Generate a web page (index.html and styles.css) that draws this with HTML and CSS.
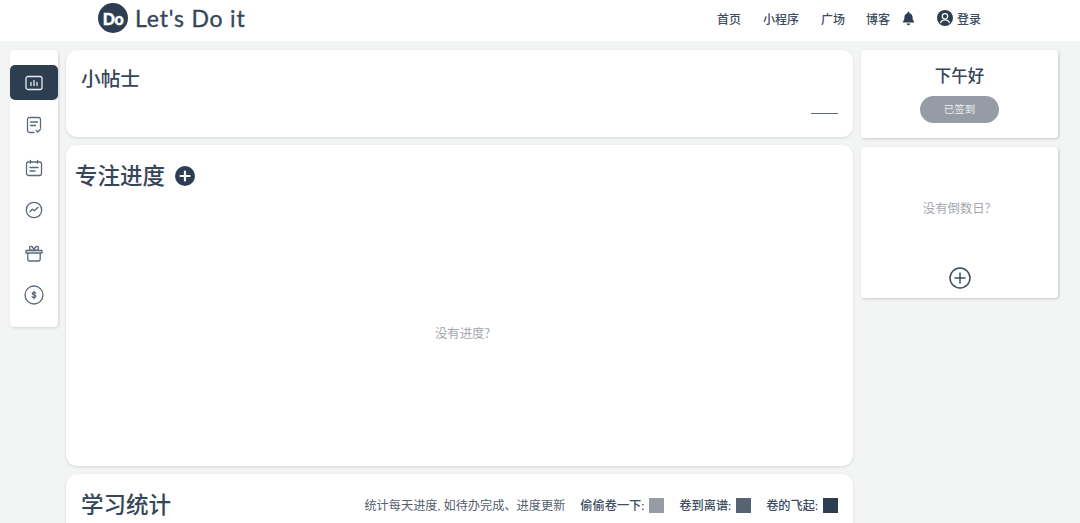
FILE: index.html
```html
<!DOCTYPE html>
<html lang="zh">
<head>
<meta charset="utf-8">
<title>Let's Do it</title>
<link rel="stylesheet" href="styles.css">
</head>
<body>
<header class="topbar">
  <div class="brand">
    <span class="logo">Do</span>
    <span class="brand-name">Let's Do it</span>
  </div>
  <nav class="nav">
    <a class="nav-link">首页</a>
    <a class="nav-link">小程序</a>
    <a class="nav-link">广场</a>
    <a class="nav-link">博客</a>
    <svg class="bell" viewBox="0 0 14 16"><path d="M7 0.8c.7 0 1.1.5 1.1 1.1v.4c2.1.5 3.3 2.2 3.3 4.4 0 2.6.6 3.6 1.6 4.6.3.4.1 1-.5 1H1.500c-.6 0-.8-.6-.5-1 1-1 1.600-2 1.600-4.600 0-2.200 1.200-3.900 3.300-4.400v-.4C5.900 1.300 6.300.8 7 .8zM5.200 13.400h3.600C8.800 14.500 8 15.200 7 15.200s-1.800-.7-1.800-1.800z" fill="#2d3e50"/></svg>
    <a class="login">
      <svg class="avatar" viewBox="0 0 16 16"><circle cx="8" cy="8" r="8" fill="#2d3e50"/><circle cx="8" cy="6.300" r="2.700" fill="none" stroke="#fff" stroke-width="1.200"/><path d="M3.500 13.200c.6-2.200 2.300-3.300 4.500-3.300s3.900 1.100 4.500 3.300" fill="none" stroke="#fff" stroke-width="1.200"/></svg>
      <span>登录</span>
    </a>
  </nav>
</header>

<div class="layout">
  <aside class="sidebar">
    <div class="side-item active">
      <svg class="side-icon" viewBox="0 0 18 18"><rect x="1" y="2.500" width="16" height="13" rx="2"/><path d="M6 11.500v-3M9 11.500v-5M12 11.500v-3"/></svg>
    </div>
    <div class="side-item">
      <svg class="side-icon" viewBox="0 0 18 18"><path d="M9 16.500H4.500a2 2 0 0 1-2-2v-11a2 2 0 0 1 2-2h9a2 2 0 0 1 2 2v8"/><path d="M5.500 6h7M5.500 9.500h5"/><path d="M11 14.500l1.700 1.500 3-3"/></svg>
    </div>
    <div class="side-item">
      <svg class="side-icon" viewBox="0 0 18 18"><rect x="1.500" y="3" width="15" height="13.500" rx="2"/><path d="M5.500 1.300v3M12.500 1.300v3M5 8.500h8M5 12h5"/></svg>
    </div>
    <div class="side-item">
      <svg class="side-icon" viewBox="0 0 18 18"><circle cx="9" cy="9" r="7.700"/><path d="M5 10.800l2.300-2.600 2.200 1.600 3.500-3.600"/></svg>
    </div>
    <div class="side-item">
      <svg class="side-icon" viewBox="0 0 18 18"><path d="M1 6.500h16v2.500H1zM2.800 9v6a2 2 0 0 0 2 2h8.400a2 2 0 0 0 2-2V9"/><path d="M9 6.500c-2 0-4.500-.3-4.500-2.500 0-2.500 3.500-2.500 4.500 2.500zM9 6.500c2 0 4.500-.3 4.500-2.500 0-2.500-3.500-2.500-4.500 2.500z"/></svg>
    </div>
    <div class="side-item">
      <svg class="side-icon coin" viewBox="0 0 20 20"><circle cx="10" cy="10" r="9"/><path class="dollar" d="M11.800 8.200c-.3-.6-.9-.9-1.800-.9-1 0-1.700.5-1.700 1.300 0 1.800 3.500.9 3.500 2.700 0 .9-.8 1.400-1.800 1.400-.9 0-1.600-.4-1.900-1M10 6.200v7.600"/></svg>
    </div>
  </aside>

  <main class="center">
    <section class="card tips">
      <h2 class="title">小帖士</h2>
      <div class="tips-foot"><span class="dash"></span></div>
    </section>
    <section class="card progress">
      <div class="progress-head">
        <h2 class="title big">专注进度</h2>
        <svg class="plus-solid" viewBox="0 0 20 20"><circle cx="10" cy="10" r="10" fill="#2d3e50"/><path d="M10 5.500v9M5.500 10h9" stroke="#fff" stroke-width="2.200" stroke-linecap="round"/></svg>
      </div>
      <p class="empty progress-empty">没有进度?</p>
    </section>
    <section class="card stats">
      <h2 class="title">学习统计</h2>
      <div class="legend">
        <span class="legend-note">统计每天进度, 如待办完成、进度更新</span>
        <span class="legend-item">偷偷卷一下:<i class="swatch low"></i></span>
        <span class="legend-item">卷到离谱:<i class="swatch mid"></i></span>
        <span class="legend-item">卷的飞起:<i class="swatch high"></i></span>
      </div>
    </section>
  </main>

  <aside class="right">
    <section class="box greet">
      <h3 class="greet-title">下午好</h3>
      <button class="signed">已签到</button>
    </section>
    <section class="box countdown">
      <p class="empty countdown-empty">没有倒数日?</p>
      <svg class="plus-line" viewBox="0 0 22 22"><circle cx="11" cy="11" r="10" fill="none" stroke="#3c4d60" stroke-width="1.500"/><path d="M11 6v10M6 11h10" stroke="#3c4d60" stroke-width="1.500" stroke-linecap="round"/></svg>
    </section>
  </aside>
</div>
</body>
</html>
```
FILE: styles.css
```css
* { box-sizing: border-box; }
html, body { height: 523px; overflow: hidden; }
body {
  margin: 0;
  background: #f3f5f5;
  color: #2d3e50;
  font-family: Lato, "Noto Sans CJK SC", sans-serif;
}
.topbar {
  height: 41px;
  background: #fff;
  display: flex;
  align-items: center;
  justify-content: space-between;
  padding: 0 99px 0 98px;
}
.brand { display: flex; align-items: center; gap: 7px; margin-top: -5px; }
.logo {
  width: 30px;
  height: 30px;
  border-radius: 50%;
  background: #2d3e50;
  color: #fff;
  font-size: 16px;
  font-weight: 900;
  display: flex;
  align-items: center;
  justify-content: center;
  letter-spacing: -0.5px;
  -webkit-text-stroke: 0.4px #fff;
}
.brand-name {
  font-size: 23px;
  color: #36465a;
  letter-spacing: 0.8px;
  line-height: 30px;
  -webkit-text-stroke: 0.35px #36465a;
}
.nav { display: flex; align-items: center; margin-top: -5px; }
.nav-link { font-size: 12px; font-weight: 500; color: #3c4d60; margin: 4px 21px 0 0; line-height: 18px; }
.nav-link:nth-child(1) { margin-right: 22px; }
.nav-link:nth-child(2) { margin-right: 22px; }
.nav-link:nth-child(4) { margin-right: 12px; }
.bell { width: 13px; height: 15px; margin-right: 22px; }
.login { display: flex; align-items: center; gap: 4px; font-size: 12px; font-weight: 500; color: #3c4d60; }
.avatar { width: 16px; height: 16px; }

.layout {
  display: grid;
  grid-template-columns: 48px 787px 197px;
  column-gap: 8px;
  padding: 9px 0 0 10px;
  align-items: start;
}
.sidebar {
  height: 277px;
  background: #fff;
  border-radius: 4px;
  box-shadow: 1px 1px 3px rgba(0,0,0,.14);
  padding-top: 15px;
  display: flex;
  flex-direction: column;
  gap: 7.600px;
}
.side-item {
  height: 35px;
  display: flex;
  align-items: center;
  justify-content: center;
  border-radius: 5px;
  color: #5a6a7c;
}
.side-item.active { background: #2d3e50; color: #e8ecef; }
.side-icon {
  width: 18px;
  height: 18px;
  fill: none;
  stroke: currentColor;
  stroke-width: 1.300;
  stroke-linecap: round;
  stroke-linejoin: round;
}
.coin { width: 20px; height: 20px; }

.center { display: flex; flex-direction: column; gap: 8px; }
.card {
  background: #fff;
  border-radius: 11px;
  box-shadow: 0 1px 3px rgba(0,0,0,.12);
}
.title { margin: 0; font-size: 19.700px; line-height: 28px; font-weight: 500; color: #36465a; }
.title.big { font-size: 22.500px; line-height: 32px; }
.tips { height: 87px; padding: 15px 15px 0; }
.tips-foot { display: flex; justify-content: flex-end; margin-top: 20px; }
.dash { width: 27px; height: 1px; background: #5a6a7c; }
.progress { height: 321px; padding: 15px 9px 0; display: flex; flex-direction: column; }
.progress-head { display: flex; align-items: center; gap: 10px; }
.plus-solid { width: 20px; height: 20px; }
.empty { margin: 0; font-size: 12.400px; color: #a4a8ad; text-align: center; line-height: 18px; }
.progress-empty { margin: 133px 0 0 6px; }
.countdown-empty { margin-right: 6px; }
.stats {
  height: 80px;
  padding: 16px 15px 0;
  display: flex;
  justify-content: space-between;
  align-items: flex-start;
}
.stats .title { font-size: 22.500px; line-height: 30px; }
.legend { display: flex; align-items: center; font-size: 12.200px; margin-top: 7px; height: 16px; }
.legend-note { color: #55606e; margin-right: 15px; }
.legend-item { display: flex; align-items: center; font-weight: 500; color: #3c4d60; margin-left: 15px; gap: 5px; }
.legend-note + .legend-item { margin-left: 0; }
.swatch { width: 15px; height: 15px; display: block; }
.low { background: #959ca6; }
.mid { background: #566373; }
.high { background: #2d3e50; }

.right { display: flex; flex-direction: column; gap: 9px; }
.box {
  background: #fff;
  border-radius: 4px;
  box-shadow: 1px 1px 3px rgba(0,0,0,.18);
  display: flex;
  flex-direction: column;
  align-items: center;
}
.greet { height: 88px; padding-top: 13px; }
.greet-title { margin: 0; font-size: 16.500px; line-height: 26px; font-weight: 500; color: #36465a; }
.signed {
  margin-top: 7px;
  width: 79px;
  height: 27px;
  border: 0;
  border-radius: 14px;
  background: #959ca6;
  color: #eceef0;
  font: inherit;
  font-size: 10.500px;
  padding: 0 0 2px;
}
.countdown { height: 151px; padding-top: 53px; }
.plus-line { width: 22px; height: 22px; margin-top: 49px; }
```
